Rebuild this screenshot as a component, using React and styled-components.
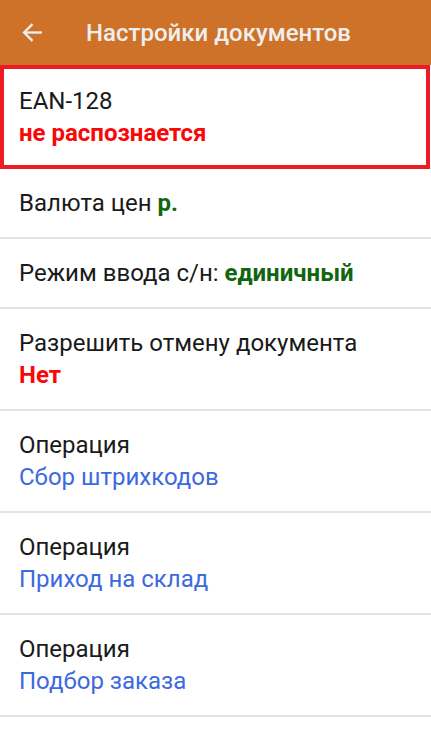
import React from "react";
import styled, { createGlobalStyle } from "styled-components";

const GlobalStyle = createGlobalStyle`
  html, body {
    margin: 0;
    padding: 0;
    background: #ffffff;
  }
  body {
    font-family: Roboto, "Liberation Sans", sans-serif;
  }
`;

const Screen = styled.div`
  width: 431px;
  min-height: 739px;
  background: #ffffff;
`;

const Toolbar = styled.header`
  display: flex;
  align-items: center;
  height: 65px;
  background-color: #cf7229;
  color: #efefef;
`;

const BackButton = styled.div`
  display: flex;
  align-items: center;
  justify-content: center;
  width: 64px;
  height: 65px;

  svg {
    width: 21px;
    height: 21px;
  }
`;

const Title = styled.h1`
  margin: 0 0 0 22px;
  font-size: 24px;
  font-weight: 500;
`;

const List = styled.div`
  display: flex;
  flex-direction: column;
`;

const Row = styled.div`
  padding: ${({ $highlight }) => ($highlight ? "16px 15px" : "18px 19px")};
  border: ${({ $highlight }) => ($highlight ? "4px solid #ec1c24" : "none")};
  border-bottom: ${({ $highlight }) =>
    $highlight ? "4px solid #ec1c24" : "2px solid #e2e2e2"};
  margin-right: ${({ $highlight }) => ($highlight ? "1px" : "0")};
  font-size: 24px;
  line-height: 32px;
  color: #1a1a1a;
  white-space: nowrap;
`;

const Value = styled.span`
  display: ${({ $block }) => ($block ? "block" : "inline")};
  font-weight: ${({ $bold }) => ($bold ? 700 : 400)};
  color: ${({ $color }) => $color};
`;

const RED = "#f80808";
const GREEN = "#10660f";
const BLUE = "#3d69e0";

const ArrowBack = () => (
  <svg viewBox="0 0 20 20" fill="none" stroke="currentColor" strokeWidth="2.2">
    <path d="M19 10H2" />
    <path d="M10 2L2 10l8 8" />
  </svg>
);

const App = () => (
  <Screen>
    <GlobalStyle />
    <Toolbar>
      <BackButton>
        <ArrowBack />
      </BackButton>
      <Title>Настройки документов</Title>
    </Toolbar>
    <List>
      <Row $highlight>
        EAN-128
        <Value $block $bold $color={RED}>
          не распознается
        </Value>
      </Row>
      <Row>
        Валюта цен{" "}
        <Value $bold $color={GREEN}>
          р.
        </Value>
      </Row>
      <Row>
        Режим ввода с/н:{" "}
        <Value $bold $color={GREEN}>
          единичный
        </Value>
      </Row>
      <Row>
        Разрешить отмену документа
        <Value $block $bold $color={RED}>
          Нет
        </Value>
      </Row>
      <Row>
        Операция
        <Value $block $color={BLUE}>
          Сбор штрихкодов
        </Value>
      </Row>
      <Row>
        Операция
        <Value $block $color={BLUE}>
          Приход на склад
        </Value>
      </Row>
      <Row>
        Операция
        <Value $block $color={BLUE}>
          Подбор заказа
        </Value>
      </Row>
    </List>
  </Screen>
);

export default App;
